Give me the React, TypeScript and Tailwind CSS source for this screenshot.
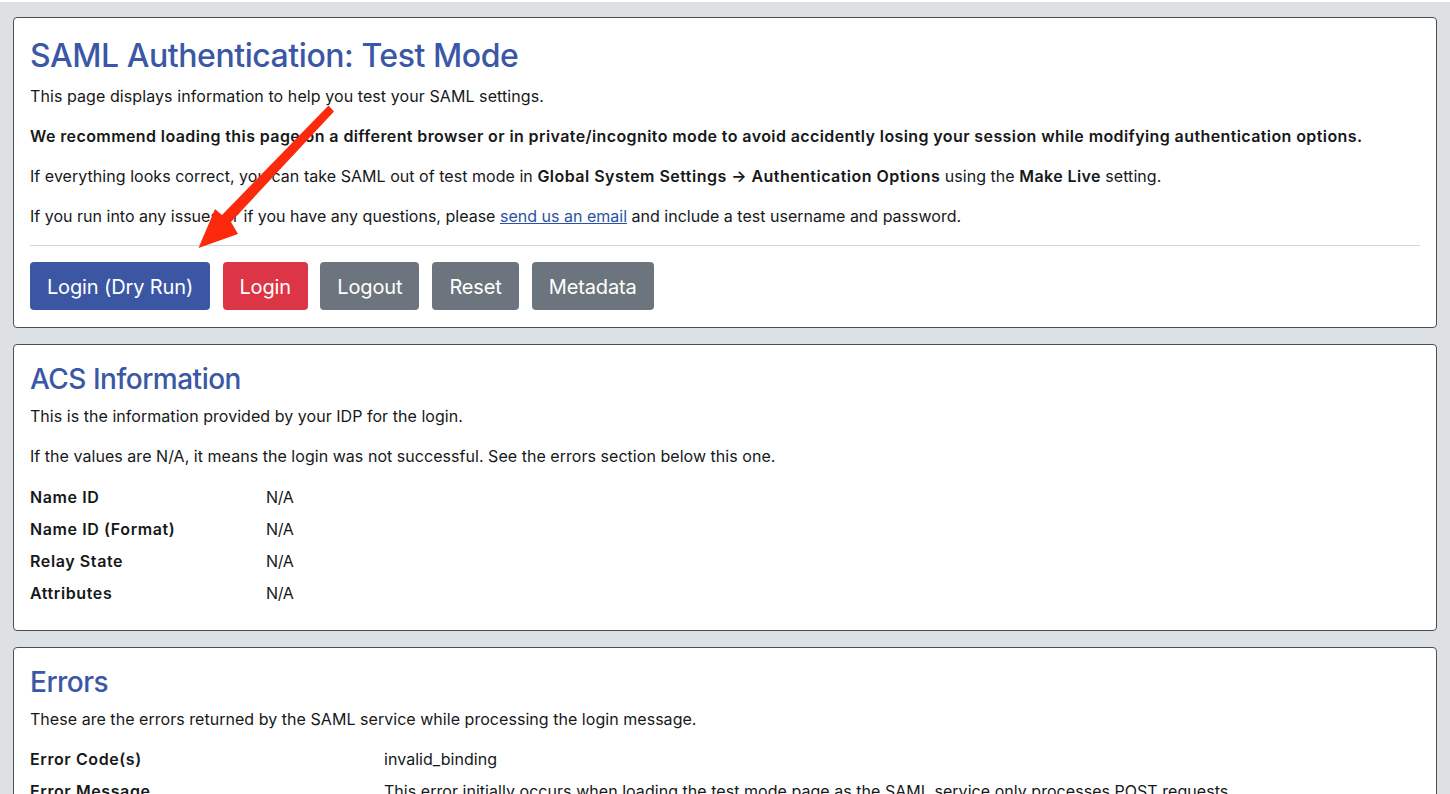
const boldClass = "font-semibold tracking-[0.4px]";
const labelClass = "shrink-0 font-semibold tracking-[0.6px]";

function Row({ label, value, wide }: { label: string; value: string; wide?: boolean }) {
  return (
    <div className="flex h-[32px] items-center">
      <div className={wide ? `w-[354px] ${labelClass}` : `w-[236px] ${labelClass}`}>{label}</div>
      <div className={wide ? "whitespace-nowrap" : "whitespace-nowrap tracking-[-0.4px]"}>{value}</div>
    </div>
  );
}

function Card({ children, className }: { children: React.ReactNode; className: string }) {
  return (
    <section className={`rounded-[4px] border border-[#4a4f54] bg-white px-4 ${className}`}>
      {children}
    </section>
  );
}

function Btn({ children, color, width }: { children: string; color: string; width: string }) {
  return (
    <button type="button" className={`h-[48px] rounded-[4px] pt-[1px] text-center text-[20px] tracking-[-0.13px] text-white ${color} ${width}`}>
      {children}
    </button>
  );
}

export default function App() {
  return (
    <div className="relative h-[794px] w-[1450px] overflow-hidden bg-white pt-[2px] font-['Inter',sans-serif] text-[16px] tracking-[0.04px] text-[#16181a]">
      <div className="flex h-[792px] flex-col gap-[16px] bg-[#dee1e3] px-[13px] pt-[15px]">
        <Card className="h-[311px] shrink-0">
          <h1 className="pt-[17px] text-[32px] leading-[42px] font-medium tracking-[-0.45px] text-[#3a58a6]">SAML Authentication: Test Mode</h1>
          <p className="mt-[7px] leading-[24px] tracking-[0.08px]">This page displays information to help you test your SAML settings.</p>
          <p className={`mt-[16px] leading-[24px] whitespace-nowrap ${boldClass}`}>
            We recommend loading this page on a different browser or in private/incognito mode to avoid accidently losing your session while modifying authentication options.
          </p>
          <p className="mt-[16px] leading-[24px]">
            If everything looks correct, you can take SAML out of test mode in <b className="font-semibold tracking-[0.47px]">Global System Settings → Authentication Options</b> using the <b className={boldClass}>Make Live</b> setting.
          </p>
          <p className="mt-[16px] leading-[24px] tracking-[0.01px]">
            If you run into any issues or if you have any questions, please <a className="text-[#2b52a6] underline">send us an email</a> and include a test username and password.
          </p>
          <hr className="mt-[17px] border-t border-[#d3d5d8]" />
          <div className="mt-[16px] flex gap-[12.7px]">
            <Btn color="bg-[#3b57a4]" width="w-[180px]">Login (Dry Run)</Btn>
            <Btn color="bg-[#dc3545]" width="w-[85px]">Login</Btn>
            <Btn color="bg-[#6c757d]" width="w-[99px]">Logout</Btn>
            <Btn color="bg-[#6c757d]" width="w-[87px]">Reset</Btn>
            <Btn color="bg-[#6c757d]" width="w-[122px]">Metadata</Btn>
          </div>
        </Card>
        <Card className="h-[287px] shrink-0">
          <h2 className="pt-[14px] text-[28px] leading-[40px] font-medium tracking-[-0.5px] text-[#3a58a6]">ACS Information</h2>
          <p className="mt-[5px] leading-[24px]">This is the information provided by your IDP for the login.</p>
          <p className="mt-[16px] leading-[24px]">If the values are N/A, it means the login was not successful. See the errors section below this one.</p>
          <div className="mt-[13px]">
            <Row label="Name ID" value="N/A" />
            <Row label="Name ID (Format)" value="N/A" />
            <Row label="Relay State" value="N/A" />
            <Row label="Attributes" value="N/A" />
          </div>
        </Card>
        <Card className="h-[200px] shrink-0">
          <h2 className="pt-[14px] text-[28px] leading-[40px] font-medium tracking-[-0.5px] text-[#3a58a6]">Errors</h2>
          <p className="mt-[5px] leading-[24px]">These are the errors returned by the SAML service while processing the login message.</p>
          <div className="mt-[12px]">
            <Row wide label="Error Code(s)" value="invalid_binding" />
            <Row wide label="Error Message" value="This error initially occurs when loading the test mode page as the SAML service only processes POST requests." />
          </div>
        </Card>
      </div>
      <svg className="absolute top-0 left-0" width="1450" height="794" viewBox="0 0 1450 794" fill="none">
        <path d="M328.5 105.5 L334 111.5 L231 222 L238 234 L198.500 248 L215 209 L222 215 Z" fill="#fb2a0c" />
      </svg>
    </div>
  );
}
